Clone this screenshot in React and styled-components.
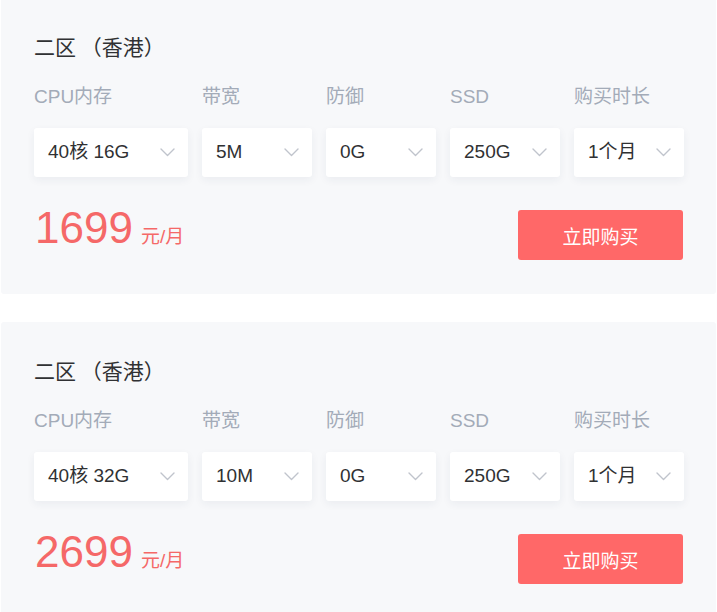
import React from "react";
import styled, { createGlobalStyle } from "styled-components";

const Global = createGlobalStyle`
  html, body { margin: 0; padding: 0; background: #ffffff; }
  body { font-family: "Liberation Sans", Arial, "Noto Sans CJK SC", sans-serif; }
  * { box-sizing: border-box; }
`;

const Page = styled.div`
  display: flex;
  flex-direction: column;
  gap: 28px;
  margin-top: -2px;
  padding-left: 1px;
  padding-right: 1px;
`;

const Card = styled.section`
  background: #f7f8fa;
  border-radius: 3px;
  padding: 34px 33px 34px 33px;
  display: flex;
  flex-direction: column;
`;

const Title = styled.h2`
  margin: 0;
  font-size: 21px;
  line-height: 28px;
  height: 28px;
  font-weight: 400;
  color: #303133;
  font-family: "Noto Sans CJK SC", sans-serif;
`;

const Fields = styled.div`
  margin-top: 25px;
  display: grid;
  grid-template-columns: 154px 110px 110px 110px 110px;
  column-gap: 14px;
`;

const Field = styled.div`
  display: flex;
  flex-direction: column;
  gap: 19px;
`;

const Label = styled.div`
  font-size: 19px;
  line-height: 24px;
  height: 24px;
  color: #a3abb8;
`;

const Select = styled.div`
  height: 49px;
  background: #ffffff;
  border-radius: 3px;
  box-shadow: 0 3px 8px rgba(40, 50, 80, 0.06);
  display: flex;
  align-items: center;
  justify-content: space-between;
  padding: 0 13px 0 14px;
  font-size: 19px;
  color: #303133;
`;

const Value = styled.span`
  line-height: 19px;
  height: 19px;
  display: block;
  margin-top: -3px;
`;

const Chevron = () => (
  <svg width="15" height="9" viewBox="0 0 15 9" fill="none">
    <polyline points="1,1 7.5,7.5 14,1" stroke="#c0c4cc" strokeWidth="1.4" strokeLinecap="round" strokeLinejoin="round" />
  </svg>
);

const Footer = styled.div`
  margin-top: 33px;
  height: 50px;
  display: flex;
  align-items: flex-start;
  justify-content: space-between;
`;

const Price = styled.div`
  color: #f56868;
  padding-left: 1px;
  display: flex;
  align-items: baseline;
  gap: 8px;
`;

const Amount = styled.span`
  font-size: 44px;
  line-height: 36px;
`;

const Unit = styled.span`
  font-size: 19px;
  line-height: 20px;
`;

const BuyButton = styled.button`
  width: 165px;
  height: 50px;
  border: none;
  border-radius: 3px;
  background: #ff6868;
  color: #ffffff;
  font-size: 19px;
  font-family: "Noto Sans CJK SC", sans-serif;
  cursor: pointer;
  padding: 0;
`;

const plans = [
  { cpu: "40核 16G", bw: "5M", def: "0G", ssd: "250G", dur: "1个月", price: "1699" },
  { cpu: "40核 32G", bw: "10M", def: "0G", ssd: "250G", dur: "1个月", price: "2699" },
];

const labels = ["CPU内存", "带宽", "防御", "SSD", "购买时长"];

export default function App() {
  return (
    <>
      <Global />
      <Page>
        {plans.map((p, i) => {
          const values = [p.cpu, p.bw, p.def, p.ssd, p.dur];
          return (
            <Card key={i}>
              <Title>二区 （香港）</Title>
              <Fields>
                {labels.map((l, j) => (
                  <Field key={l}>
                    <Label>{l}</Label>
                    <Select>
                      <Value>{values[j]}</Value>
                      <Chevron />
                    </Select>
                  </Field>
                ))}
              </Fields>
              <Footer>
                <Price>
                  <Amount>{p.price}</Amount>
                  <Unit>元/月</Unit>
                </Price>
                <BuyButton>立即购买</BuyButton>
              </Footer>
            </Card>
          );
        })}
      </Page>
    </>
  );
}
